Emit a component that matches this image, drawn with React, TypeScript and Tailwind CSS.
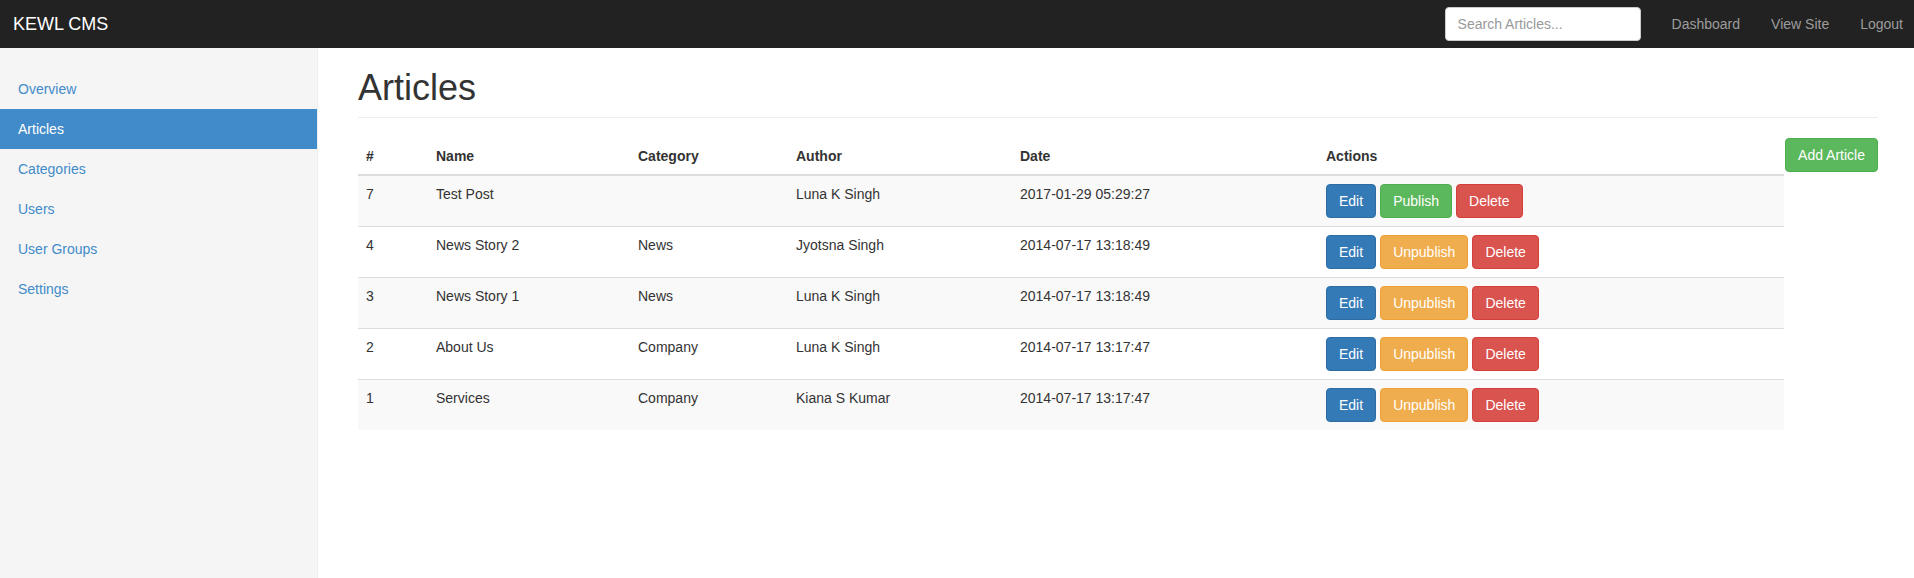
import React from "react";

const rows = [
  { id: "7", name: "Test Post", cat: "", author: "Luna K Singh", date: "2017-01-29 05:29:27", published: false },
  { id: "4", name: "News Story 2", cat: "News", author: "Jyotsna Singh", date: "2014-07-17 13:18:49", published: true },
  { id: "3", name: "News Story 1", cat: "News", author: "Luna K Singh", date: "2014-07-17 13:18:49", published: true },
  { id: "2", name: "About Us", cat: "Company", author: "Luna K Singh", date: "2014-07-17 13:17:47", published: true },
  { id: "1", name: "Services", cat: "Company", author: "Kiana S Kumar", date: "2014-07-17 13:17:47", published: true },
];

const nav = ["Overview", "Articles", "Categories", "Users", "User Groups", "Settings"];

export default function App() {
  return (
    <div
      className="min-h-screen flex flex-col bg-white text-[#333] text-[14px] leading-[20px]"
      style={{ fontFamily: '"Liberation Sans", Arial, Helvetica, sans-serif' }}
    >
      <header className="h-[48px] bg-[#222] flex items-center shrink-0">
        <div className="pl-[13px] text-[18px] leading-[20px] text-white">KEWL CMS</div>
        <div className="ml-auto flex items-center pr-[11px]">
          <input
            type="text"
            placeholder="Search Articles..."
            className="w-[196px] h-[34px] px-[12px] py-[6px] bg-white border border-[#ccc] rounded-[4px] text-[14px] text-[#555] placeholder:text-[#999] outline-none"
          />
          <nav className="flex items-center gap-[31px] ml-[31px] text-[#9d9d9d]">
            <a>Dashboard</a>
            <a>View Site</a>
            <a>Logout</a>
          </nav>
        </div>
      </header>
      <div className="flex flex-1">
        <aside className="w-[318px] shrink-0 bg-[#f5f5f5] border-r border-[#eee] pt-[21px]">
          <ul>
            {nav.map((n) => (
              <li key={n}>
                <a
                  className={
                    n === "Articles"
                      ? "block px-[18px] py-[10px] bg-[#428bca] text-white"
                      : "block px-[18px] py-[10px] text-[#428bca]"
                  }
                >
                  {n}
                </a>
              </li>
            ))}
          </ul>
        </aside>
        <main className="flex-1 pl-[40px] pr-[36px] pt-[20px]">
          <h1 className="text-[36px] leading-[1.1] font-normal pb-[9px] border-b border-[#eee] mb-[20px]">
            Articles
          </h1>
          <div className="flex items-start gap-[1px]">
            <table className="flex-1 border-collapse">
              <thead>
                <tr>
                  <th className="w-[70px] text-left font-bold p-[8px] border-b-2 border-[#ddd]">#</th>
                  <th className="w-[202px] text-left font-bold p-[8px] border-b-2 border-[#ddd]">Name</th>
                  <th className="w-[158px] text-left font-bold p-[8px] border-b-2 border-[#ddd]">Category</th>
                  <th className="w-[224px] text-left font-bold p-[8px] border-b-2 border-[#ddd]">Author</th>
                  <th className="w-[306px] text-left font-bold p-[8px] border-b-2 border-[#ddd]">Date</th>
                  <th className="text-left font-bold p-[8px] border-b-2 border-[#ddd]">Actions</th>
                </tr>
              </thead>
              <tbody>
                {rows.map((r, i) => (
                  <tr key={r.id} className={i % 2 === 0 ? "bg-[#f9f9f9]" : ""}>
                    <td className="p-[8px] align-top border-t border-[#ddd]">{r.id}</td>
                    <td className="p-[8px] align-top border-t border-[#ddd]">{r.name}</td>
                    <td className="p-[8px] align-top border-t border-[#ddd]">{r.cat}</td>
                    <td className="p-[8px] align-top border-t border-[#ddd]">{r.author}</td>
                    <td className="p-[8px] align-top border-t border-[#ddd]">{r.date}</td>
                    <td className="p-[8px] align-top border-t border-[#ddd]">
                      <div className="flex gap-[4px]">
                        <button className="px-[12px] py-[6px] leading-[20px] text-[14px] border border-[#2e6da4] bg-[#337ab7] text-white rounded-[4px]">
                          Edit
                        </button>
                        {r.published ? (
                          <button className="px-[12px] py-[6px] leading-[20px] text-[14px] border border-[#eea236] bg-[#f0ad4e] text-white rounded-[4px]">
                            Unpublish
                          </button>
                        ) : (
                          <button className="px-[12px] py-[6px] leading-[20px] text-[14px] border border-[#4cae4c] bg-[#5cb85c] text-white rounded-[4px]">
                            Publish
                          </button>
                        )}
                        <button className="px-[12px] py-[6px] leading-[20px] text-[14px] border border-[#d43f3a] bg-[#d9534f] text-white rounded-[4px]">
                          Delete
                        </button>
                      </div>
                    </td>
                  </tr>
                ))}
              </tbody>
            </table>
            <button className="shrink-0 px-[12px] py-[6px] leading-[20px] text-[14px] border border-[#4cae4c] bg-[#5cb85c] text-white rounded-[4px]">
              Add Article
            </button>
          </div>
        </main>
      </div>
    </div>
  );
}
